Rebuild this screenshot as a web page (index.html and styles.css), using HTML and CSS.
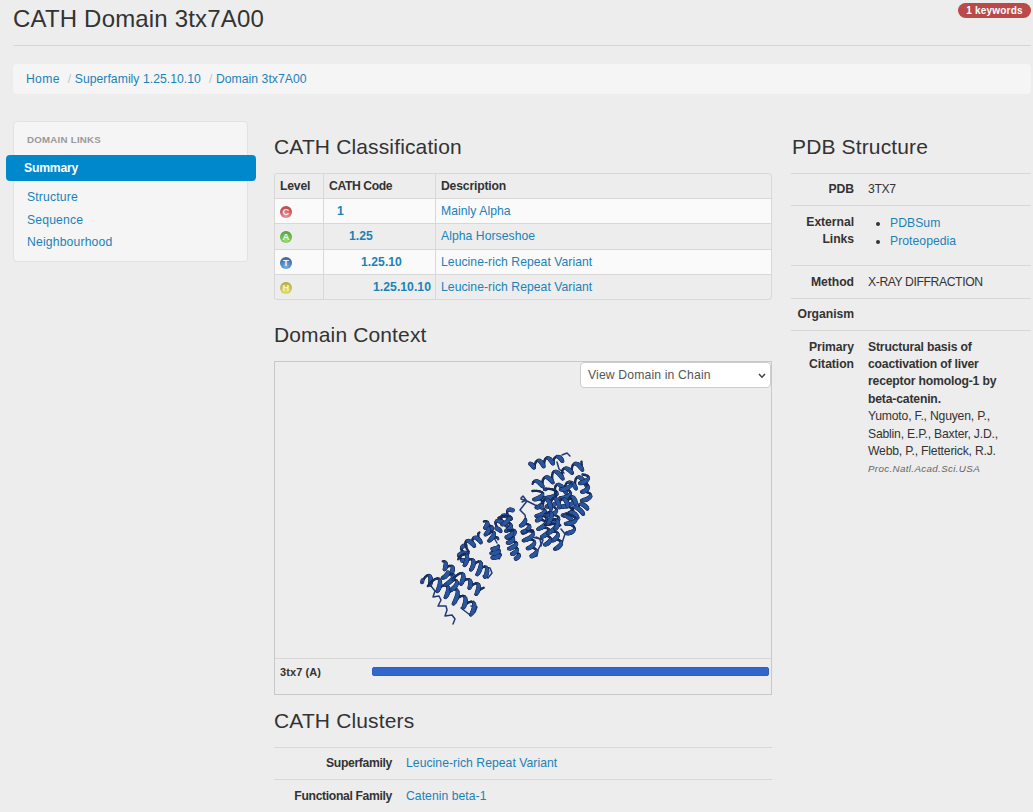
FILE: index.html
```
<!DOCTYPE html>
<html lang="en">
<head>
<meta charset="utf-8">
<title>CATH Domain 3tx7A00</title>
<link rel="stylesheet" href="styles.css">
</head>
<body>
<div class="page">
  <header class="page-header">
    <h1>CATH Domain 3tx7A00</h1>
    <span class="badge">1 keywords</span>
  </header>
  <nav class="breadcrumb">
    <a>Home</a><span class="divider">/</span><a>Superfamily 1.25.10.10</a><span class="divider">/</span><a>Domain 3tx7A00</a>
  </nav>
  <div class="columns">
    <aside class="well">
      <div class="nav-header">DOMAIN LINKS</div>
      <a class="active">Summary</a>
      <a>Structure</a>
      <a>Sequence</a>
      <a>Neighbourhood</a>
    </aside>
    <main class="main">
      <h2>CATH Classification</h2>
      <table class="classification">
        <thead><tr><th class="level">Level</th><th class="code">CATH Code</th><th>Description</th></tr></thead>
        <tbody>
          <tr class="odd"><td><span class="orb orb-c">C</span></td><td class="code d1"><a>1</a></td><td><a>Mainly Alpha</a></td></tr>
          <tr><td><span class="orb orb-a">A</span></td><td class="code d2"><a>1.25</a></td><td><a>Alpha Horseshoe</a></td></tr>
          <tr class="odd"><td><span class="orb orb-t">T</span></td><td class="code d3"><a>1.25.10</a></td><td><a>Leucine-rich Repeat Variant</a></td></tr>
          <tr><td><span class="orb orb-h">H</span></td><td class="code d4"><a>1.25.10.10</a></td><td><a>Leucine-rich Repeat Variant</a></td></tr>
        </tbody>
      </table>
      <h2 class="context-title">Domain Context</h2>
      <section class="context">
        <div class="viewer">
          <svg id="protein" class="protein" viewBox="410 440 190 190" width="190" height="190"></svg>
          <div class="select">View Domain in Chain
            <svg width="8" height="6" viewBox="0 0 8 6"><path d="M1 1l3 3.2L7 1" fill="none" stroke="#444" stroke-width="1.5"/></svg>
          </div>
        </div>
        <div class="chain"><b>3tx7 (A)</b><span class="bar"></span></div>
      </section>
      <h2 class="clusters-title">CATH Clusters</h2>
      <dl class="clusters">
        <div><dt>Superfamily</dt><dd><a>Leucine-rich Repeat Variant</a></dd></div>
        <div><dt>Functional Family</dt><dd><a>Catenin beta-1</a></dd></div>
      </dl>
    </main>
    <section class="pdb">
      <h2>PDB Structure</h2>
      <dl>
        <div class="r1"><dt>PDB</dt><dd><span class="code-name">3TX7</span></dd></div>
        <div class="r2"><dt>External<br>Links</dt><dd><ul><li><a>PDBSum</a></li><li><a>Proteopedia</a></li></ul></dd></div>
        <div class="r3"><dt>Method</dt><dd><span class="method">X-RAY DIFFRACTION</span></dd></div>
        <div class="r4"><dt>Organism</dt><dd></dd></div>
        <div class="r5"><dt>Primary<br>Citation</dt><dd><b>Structural basis of<br>coactivation of liver<br>receptor homolog-1 by<br>beta-catenin.</b><br><span class="authors">Yumoto, F., Nguyen, P.,<br>Sablin, E.P., Baxter, J.D.,<br>Webb, P., Fletterick, R.J.</span><br><em>Proc.Natl.Acad.Sci.USA</em></dd></div>
      </dl>
    </section>
  </div>
</div>
<script src="protein.js"></script>
</body>
</html>
```
FILE: styles.css
```
* { box-sizing: border-box; }
html, body { height: 812px; overflow: hidden; }
body {
  margin: 0;
  background: #ededed;
  color: #333;
  font: 12.2px/17.4px "Liberation Sans", Arial, sans-serif;
}
a { color: #1b82b8; letter-spacing: .04px; }
.page { width: 1018px; margin-left: 13px; }
.page-header {
  display: flex;
  justify-content: space-between;
  align-items: flex-start;
  height: 46px;
  border-bottom: 1px solid #d6d6d6;
}
h1, h2 { margin: 0; font-weight: 400; white-space: nowrap; }
h1 { font-size: 24px; line-height: 28px; padding-top: 5px; letter-spacing: .18px; }
h2 { font-size: 21px; line-height: 26px; height: 26px; letter-spacing: .14px; }
.badge {
  margin-top: 3px;
  width: 73px;
  height: 15px;
  border-radius: 8px;
  background: #b94a48;
  color: #fff;
  font: bold 10px/15px "Liberation Sans", sans-serif;
  letter-spacing: .2px;
  text-align: center;
}
.breadcrumb {
  display: flex;
  height: 30px;
  margin-top: 18px;
  padding-left: 13px;
  border-radius: 4px;
  background: #f5f5f5;
  line-height: 30px;
}
.breadcrumb a:first-child { letter-spacing: .3px; }
.divider { width: 15px; padding-left: 8px; color: #c4c4c4; }
.columns { display: flex; align-items: flex-start; margin-top: 27px; }
.well {
  width: 235px;
  height: 141px;
  padding: 8px 13px;
  border: 1px solid #e2e2e2;
  border-radius: 4px;
  background: #f5f5f5;
}
.well a { display: block; line-height: 22.6px; height: 22.6px; letter-spacing: .16px; }
.nav-header {
  height: 25px;
  line-height: 20px;
  color: #999;
  font-size: 9.7px;
  font-weight: 700;
  letter-spacing: .25px;
}
.well a.active {
  height: 26px;
  margin: 0 -22px 5px -21px;
  padding-left: 18px;
  border-radius: 4px;
  background: #0088cc;
  color: #fff;
  font-weight: 700;
  line-height: 26px;
  letter-spacing: -.2px;
}
.main { width: 498px; margin-left: 26px; padding-top: 13px; }
.classification {
  width: 498px;
  margin-top: 13px;
  border: 1px solid #d8d8d8;
  border-left: 0;
  border-radius: 4px;
  border-collapse: separate;
  border-spacing: 0;
  table-layout: fixed;
}
.classification th, .classification td {
  height: 25px;
  padding: 1px 5px 0;
  border-left: 1px solid #d8d8d8;
  text-align: left;
}
.classification th { height: 24px; letter-spacing: -.18px; }
.classification th.code { letter-spacing: -.4px; }
.classification td { border-top: 1px solid #d8d8d8; }
.classification tbody tr:nth-child(2) td { height: 26px; padding-top: 0; }
.classification .odd td { background: #fafafa; }
.level { width: 49px; }
th.code { width: 112px; }
td.code { font-weight: 700; }
.classification td.d1 { padding-left: 13px; }
.classification td.d2 { padding-left: 25px; }
.classification td.d3 { padding-left: 37px; }
.classification td.d4 { padding-left: 49px; padding-right: 0; }
.orb {
  display: block;
  width: 12px;
  height: 12px;
  margin: 1px 0 0;
  border-radius: 50%;
  color: #f0f0f0;
  font: bold 9.5px/12px "Liberation Sans", sans-serif;
  text-align: center;
}
.orb-c { background: radial-gradient(circle at 50% 80%, #e99a9a, #c94f55 65%, #9a4a4e); }
.orb-a { background: radial-gradient(circle at 50% 80%, #9add78, #5fb245 65%, #4e8340); }
.orb-t { background: radial-gradient(circle at 50% 80%, #78b0e4, #3f74b8 65%, #38588c); }
.orb-h { background: radial-gradient(circle at 50% 80%, #e6df68, #c2bb45 65%, #8f8a44); }
.context-title { margin-top: 22px; }
.context {
  height: 334px;
  margin-top: 13px;
  border: 1px solid #c8c8c8;
}
.viewer {
  display: flex;
  justify-content: space-between;
  align-items: flex-start;
  height: 297px;
  border-bottom: 1px solid #d8d8d8;
}
.protein { flex: none; margin: 78px 0 0 135px; }
.select {
  display: flex;
  flex: none;
  justify-content: space-between;
  align-items: center;
  width: 191px;
  height: 26px;
  margin-left: -20px;
  padding: 1px 4px 0 7px;
  border: 1px solid #ccc;
  border-radius: 4px;
  background: #fff;
  color: #555;
  letter-spacing: .15px;
}
.chain { display: flex; align-items: center; height: 25px; padding-left: 5px; font-size: 11px; letter-spacing: .08px; }
.chain b { width: 92px; padding-top: 3px; }
.bar { width: 397px; height: 9px; border-radius: 2px; background: #3366cc; border: 1px solid #315fbd; }
.clusters-title { margin-top: 13px; }
dl { margin: 0; }
dt { font-weight: 700; text-align: right; letter-spacing: -.05px; }
dd { margin: 0; }
.clusters { margin-top: 13px; }
.clusters div { display: flex; height: 32px; padding-top: 7px; border-top: 1px solid #d8d8d8; }
.clusters div + div { padding-top: 8px; }
.clusters dt { width: 118px; letter-spacing: -.35px; }
.clusters dd { margin-left: 14px; }
.pdb { width: 240px; margin-left: 19px; padding-top: 13px; }
.pdb h2 { padding-left: 1px; }
.pdb dl { margin-top: 13px; }
.pdb dl > div { display: flex; padding-top: 7px; border-top: 1px solid #d8d8d8; }
.pdb dt { width: 63px; }
.pdb dd { margin-left: 14px; white-space: nowrap; }
.pdb dd b { letter-spacing: -.18px; }
.pdb .r1 { height: 32px; }
.pdb .r2 { height: 60px; padding-top: 8px; }
.pdb .r3 { height: 33px; padding-top: 8px; }
.pdb .r4 { height: 32px; }
.pdb .r5 { padding-top: 7.6px; }
.pdb ul { margin: 0; padding-left: 22px; line-height: 18px; }
.code-name { letter-spacing: -.35px; }
.method { letter-spacing: -.4px; }
.authors { letter-spacing: -.2px; }
.pdb em { color: #666; font-size: 9.8px; letter-spacing: .34px; }
```
FILE: protein.js
```
const NS = "http://www.w3.org/2000/svg";
const svg = document.getElementById("protein");

// Each helix: axis start, axis end, radius, number of turns.
const helices = [
  [462, 562, 465, 547, 4, 2], [466, 547, 482, 537, 4.5, 2.5],
  [484, 523, 492, 532, 3.5, 2], [486, 530, 495, 541, 4, 2],
  [422, 578, 434, 582, 4, 1.5], [432, 582, 475, 610, 6, 5],
  [442, 564, 452, 571, 4, 1.5], [445, 573, 455, 588, 5.5, 2.5],
  [455, 575, 482, 592, 4.5, 3.5], [461, 558, 488, 574, 5.5, 4],
  [495, 546, 496, 559, 4, 3], [496, 530, 512, 512, 5, 3],
  [503, 516, 512, 536, 4.5, 3], [508, 532, 516, 557, 4, 4.5],
  [522, 521, 529, 534, 4.5, 2], [526, 529, 533, 554, 5, 3],
  [537, 491, 542, 520, 4.5, 3.5], [535, 486, 584, 464, 4.5, 5],
  [530, 466, 563, 458, 3.5, 3.5], [550, 488, 552, 522, 6, 4],
  [556, 492, 586, 480, 5.5, 3], [565, 484, 567, 514, 6, 3.5],
  [539, 517, 549, 545, 4.5, 3.5], [549, 523, 559, 547, 4.5, 3],
  [583, 476, 587, 502, 4.5, 3], [567, 520, 585, 506, 5, 3.5],
  [540, 505, 574, 502, 5, 4], [571, 515, 570, 534, 4.5, 2],
  [546, 516, 560, 528, 5, 2]
];

// Unstructured loops joining the helices.
const loops = [
  "M431 586l4 5-2 6 6-1 2 4-3 6 8 0 1 4-2 6 7-1 3 4-2 5",
  "M521 499l6 2-7 9 5 5 1 6M521 498l2-2 3 4-4 2M527 501l8 4 7 2",
  "M562 455l5-2 3 3M557 462l2 7 5 4",
  "M532 537l8 2 1 5-3 6-1 6-5 1M561 529l4 5-4 12-5 3M493 536l4 7M536 537l7 3-2 6",
  "M482 567l8 1 2 5-4 5-5-2M461 608l9 7 5-3 2-5-6-1"
];

function add(d, color, width) {
  const p = document.createElementNS(NS, "path");
  p.setAttribute("d", d);
  p.setAttribute("fill", "none");
  p.setAttribute("stroke", color);
  p.setAttribute("stroke-width", width);
  p.setAttribute("stroke-linejoin", "round");
  p.setAttribute("stroke-linecap", "round");
  svg.appendChild(p);
}

loops.forEach(d => add(d, "#1f3a78", 1.5));

helices.forEach(([x0, y0, x1, y1, r, turns], k) => {
  const len = Math.hypot(x1 - x0, y1 - y0);
  const ux = (x1 - x0) / len, uy = (y1 - y0) / len;
  const steps = Math.round(turns * 12);
  const angle = t => t * turns * 2 * Math.PI + k * 1.7;
  const point = i => {
    const t = i / steps, a = angle(t);
    const s = r * (1 + 0.2 * Math.sin(a * 0.37 + k)) * Math.sin(a), c = r * 0.35 * Math.cos(a);
    return [(x0 + ux * (t * len + c) - uy * s).toFixed(1), (y0 + uy * (t * len + c) + ux * s).toFixed(1)];
  };
  for (const front of [false, true]) {
    const pieces = [];
    for (let i = 0; i < steps; i++) {
      const depth = Math.cos(angle((i + 0.5) / steps));
      if ((depth > 0) !== front) continue;
      pieces.push({ d: "M" + point(i) + "L" + point(i + 1), depth, w: front ? 2.3 + depth * 2.5 : 2.3 });
    }
    pieces.forEach(p => add(p.d, "#12234a", p.w));
    pieces.forEach(p => add(p.d, front ? (p.depth > 0.5 ? "#2a559f" : "#234687") : "#193267", p.w - 1));
  }
});
```
